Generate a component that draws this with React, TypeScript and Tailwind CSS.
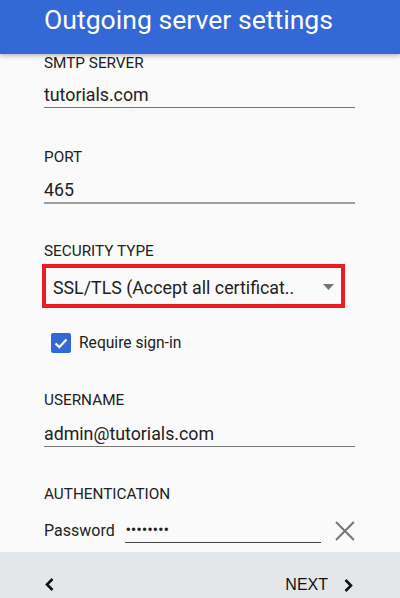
import React from "react";

function Label({ children, className = "" }: { children: React.ReactNode; className?: string }) {
  return <div className={`text-[15.3px] leading-[20px] text-[#212121] ${className}`}>{children}</div>;
}

export default function App() {
  return (
    <div className="flex h-[598px] w-[400px] flex-col overflow-hidden bg-[#fafafa] font-['Roboto',sans-serif]">
      <header className="relative z-10 h-[54px] shrink-0 bg-[#3468d6] pl-[44px] pt-[7px] shadow-[0_2px_4px_rgba(0,0,0,0.25)]">
        <h1 className="text-[26.6px] leading-[26px] text-white">Outgoing server settings</h1>
      </header>

      <div className="flex flex-1 flex-col overflow-hidden pl-[44px] pr-[45px]">
        <Label className="-mt-[1px]">SMTP SERVER</Label>
        <div className="mt-[10px] border-b border-[#777] text-[17.8px] leading-[24px] text-[#212121]">tutorials.com</div>

        <Label className="mt-[39px]">PORT</Label>
        <div className="mt-[11px] border-b-2 border-[#a0a0a0] text-[17.8px] leading-[24px] text-[#212121]">465</div>

        <Label className="mt-[37px]">SECURITY TYPE</Label>
        <div className="-ml-[2px] mt-[3px] flex h-[44px] w-[303px] items-center justify-between border-4 border-[#ed1c24] pl-[7px] pr-[7px] pt-[3px]">
          <span className="text-[17.8px] leading-[24px] text-[#212121]">SSL/TLS (Accept all certificat..</span>
          <svg width="11" height="6" viewBox="0 0 11 6" className="-mt-[2px]">
            <path d="M0 0h11L5.5 6z" fill="#757575" />
          </svg>
        </div>

        <div className="ml-[7px] mt-[25px] flex h-[20px] items-center gap-[8px]">
          <div className="flex h-[20px] w-[20px] items-center justify-center rounded-[2px] bg-[#3468d6]">
            <svg width="14" height="11" viewBox="0 0 14 11">
              <path d="M1.5 5.5l3.8 3.6L12.5 1.5" stroke="white" strokeWidth="2.2" fill="none" />
            </svg>
          </div>
          <span className="text-[15.6px] leading-[20px] text-[#212121]">Require sign-in</span>
        </div>

        <Label className="mt-[37px]">USERNAME</Label>
        <div className="mt-[12px] border-b border-[#777] text-[17.8px] leading-[24px] text-[#212121]">admin@tutorials.com</div>

        <Label className="mt-[37px]">AUTHENTICATION</Label>
        <div className="mt-[14px] flex items-center">
          <span className="text-[16px] leading-[24px] text-[#212121]">Password</span>
          <div className="ml-[10px] h-[25px] w-[198px] border-b border-[#444] pl-[1px] text-[14px] font-bold leading-[24px] tracking-[0.4px] text-[#212121]">
            ••••••••
          </div>
          <svg width="20" height="20" viewBox="0 0 20 20" className="ml-[14px]">
            <path d="M1 1l18 18M19 1L1 19" stroke="#757575" strokeWidth="2" />
          </svg>
        </div>
      </div>

      <footer className="flex h-[46px] shrink-0 items-center bg-[#e4e7ea] pl-[45px] pr-[47px] pt-[20px] font-['Liberation_Sans',sans-serif]">
        <svg width="9" height="13" viewBox="0 0 9 13" className="-mt-[2px]">
          <path d="M7.5 1L2 6.5L7.5 12" stroke="#111" strokeWidth="2.6" fill="none" />
        </svg>
        <div className="ml-auto flex items-center">
          <span className="text-[16px] leading-[20px] text-[#111]">NEXT</span>
          <svg width="9" height="13" viewBox="0 0 9 13" className="ml-[16px]">
            <path d="M1.5 1L7 6.5L1.5 12" stroke="#111" strokeWidth="2.6" fill="none" />
          </svg>
        </div>
      </footer>
    </div>
  );
}
